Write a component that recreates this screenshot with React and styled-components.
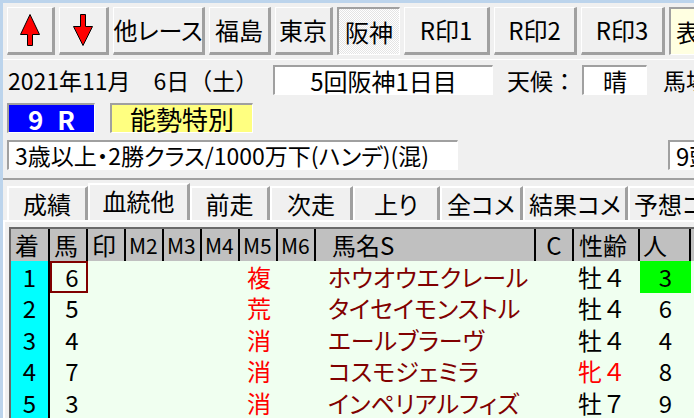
import React from 'react'
import styled, { createGlobalStyle } from 'styled-components'

const GlobalStyle = createGlobalStyle`
  html, body {
    margin: 0;
    padding: 0;
  }
  body {
    width: 694px;
    height: 418px;
    overflow: hidden;
    background: #f0f0f0;
    font-family: "Noto Sans CJK JP", "DejaVu Sans", sans-serif;
    color: #000;
  }
`

const Window = styled.div`
  width: 694px;
  height: 418px;
  box-sizing: border-box;
  border-top: 3px solid #bcd4ec;
  border-left: 3px solid #bcd4ec;
  background: #f0f0f0;
  overflow: hidden;
  display: flex;
  flex-direction: column;
`

const Toolbar = styled.div`
  display: flex;
  gap: 4px;
  padding: 4px 0 4px 4px;
  border-bottom: 1px solid #fff;
  overflow: hidden;
`

const ToolButton = styled.div`
  flex: none;
  box-sizing: border-box;
  width: ${p => p.$w}px;
  height: 48px;
  display: flex;
  align-items: center;
  justify-content: center;
  font-size: 24px;
  line-height: 1;
  white-space: nowrap;
  font-feature-settings: "palt";
  border-style: solid;
  border-width: ${p => (p.$pressed ? '2px 1px 1px 2px' : '1px 3px 3px 1px')};
  border-color: ${p => (p.$pressed ? '#a0a0a0 #fff #fff #a0a0a0' : '#fff #a0a0a0 #a0a0a0 #fff')};
  background-color: ${p => (p.$tone === 'yellow' ? '#ffffe1' : '#f0f0f0')};
  background-image: ${p =>
    p.$pressed && p.$tone !== 'yellow'
      ? 'repeating-conic-gradient(#ffffff 0 25%, #e4e4e4 0 50%)'
      : 'none'};
  background-size: 2px 2px;
  justify-content: ${p => (p.$tone === 'yellow' ? 'flex-start' : 'center')};
  padding-left: ${p => (p.$tone === 'yellow' ? 5 : 0)}px;
`

const InfoRow = styled.div`
  display: flex;
  align-items: center;
  height: 30px;
  margin-top: 5px;
  padding-left: 5px;
  font-size: 23px;
  line-height: 1;
  white-space: nowrap;
`

const Label = styled.span`
  flex: none;
  width: ${p => p.$w}px;
`

const Field = styled.div`
  flex: none;
  box-sizing: border-box;
  width: ${p => p.$w}px;
  height: 30px;
  margin-right: ${p => p.$mr || 0}px;
  background: #fff;
  border-style: solid;
  border-width: 2px 1px 1px 2px;
  border-color: #a0a0a0 #fff #fff #a0a0a0;
  display: flex;
  align-items: center;
  justify-content: ${p => (p.$left ? 'flex-start' : 'center')};
  padding-left: ${p => (p.$left ? 6 : 0)}px;
  font-size: ${p => p.$fs || 24}px;
  line-height: 1;
  font-feature-settings: ${p => (p.$palt ? '"palt"' : 'normal')};
  white-space: nowrap;
  overflow: hidden;
`

const RaceRow = styled.div`
  display: flex;
  gap: 15px;
  height: 30px;
  margin-top: 8px;
  padding-left: 4px;
`

const Badge = styled.div`
  flex: none;
  box-sizing: border-box;
  width: ${p => p.$w}px;
  height: 30px;
  display: flex;
  align-items: center;
  justify-content: center;
  gap: ${p => p.$gap || 0}px;
  background: ${p => p.$bg};
  color: ${p => p.$fg};
  font-size: 26px;
  line-height: 1;
  font-weight: ${p => (p.$bold ? 700 : 400)};
  border-style: solid;
  border-width: 2px 1px 1px 2px;
  border-color: #a0a0a0 #fff #fff #a0a0a0;
`

const CondRow = styled.div`
  display: flex;
  height: 30px;
  margin-top: 7px;
  padding-left: 4px;
  gap: 210px;
`

const TabStrip = styled.div`
  display: flex;
  align-items: flex-start;
  margin-top: 8px;
  border-top: 2px solid #a0a0a0;
  padding: 3px 0 0 4px;
  overflow: hidden;
  position: relative;
  z-index: 1;
`

const Tab = styled.div`
  flex: none;
  box-sizing: border-box;
  width: ${p => p.$w}px;
  height: ${p => (p.$active ? 39 : 34)}px;
  margin-top: ${p => (p.$active ? 0 : 3)}px;
  margin-bottom: ${p => (p.$active ? -2 : 0)}px;
  border-style: solid;
  border-width: 2px 3px 0 2px;
  border-color: #fff #a0a0a0 #fff #fff;
  background: #f0f0f0;
  display: flex;
  align-items: center;
  justify-content: center;
  padding-bottom: ${p => (p.$active ? 5 : 1)}px;
  font-size: 24px;
  line-height: 1;
  font-feature-settings: "palt";
  white-space: nowrap;
`

const Panel = styled.div`
  flex: 1;
  border-top: 2px solid #fff;
  border-left: 2px solid #fff;
  padding: 5px 0 0 4px;
  overflow: hidden;
`

const Grid = styled.div`
  border-top: 2px solid #696969;
  border-left: 2px solid #696969;
  background: #f0fff0;
  height: 100%;
`

const columns = '39px repeat(7, 38px) 220px 38px 66px 51px 200px'

const HeadRow = styled.div`
  display: grid;
  grid-template-columns: ${columns};
  height: 32px;
  background: #c0c0c0;
`

const HeadCell = styled.div`
  box-sizing: border-box;
  border-right: 2px solid #000;
  padding-left: ${p => p.$pl ?? 4}px;
  text-align: ${p => (p.$center ? 'center' : 'left')};
  font-size: ${p => p.$fs || 24}px;
  line-height: 32px;
  white-space: nowrap;
  overflow: hidden;
  &:last-child {
    border-right: none;
  }
`

const DataRow = styled.div`
  display: grid;
  grid-template-columns: ${columns};
  height: 31.5px;
`

const Cell = styled.div`
  box-sizing: border-box;
  display: flex;
  align-items: center;
  justify-content: ${p => (p.$align === 'left' ? 'flex-start' : 'center')};
  line-height: 1;
  font-size: 24px;
  white-space: nowrap;
  color: ${p => p.$color || '#000'};
  padding-left: ${p => p.$pl || 0}px;
  background: ${p => p.$bg || 'transparent'};
  font-feature-settings: ${p => (p.$palt ? '"palt"' : 'normal')};
`

const PosCell = styled(Cell)`
  background: #00ffff;
  border-right: 2px solid #000;
`

const NumCell = styled(Cell)`
  box-shadow: ${p => (p.$boxed ? 'inset 0 0 0 2px #800000' : 'none')};
`

const ArrowUp = () => (
  <svg width="20" height="32" viewBox="0 0 20 32">
    <polygon
      points="10,0.5 19.5,20.5 12.5,20.5 12.5,31.5 7.5,31.5 7.5,20.5 0.5,20.5"
      fill="#ff0000"
      stroke="#000"
      strokeWidth="1"
    />
  </svg>
)

const ArrowDown = () => (
  <svg width="20" height="32" viewBox="0 0 20 32">
    <polygon
      points="7.5,0.5 12.5,0.5 12.5,12.5 19.5,12.5 10,31.5 0.5,12.5 7.5,12.5"
      fill="#ff0000"
      stroke="#000"
      strokeWidth="1"
    />
  </svg>
)

const buttons = [
  { w: 92, label: '他レース' },
  { w: 62, label: '福島' },
  { w: 58, label: '東京' },
  { w: 63, label: '阪神', pressed: true },
  { w: 86, label: 'R印1' },
  { w: 83, label: 'R印2' },
  { w: 84, label: 'R印3' },
  { w: 90, label: '表示', pressed: true, tone: 'yellow' },
]

const tabs = [
  { w: 81, label: '成績' },
  { w: 102, label: '血統他', active: true },
  { w: 80, label: '前走' },
  { w: 83, label: '次走' },
  { w: 87, label: '上り' },
  { w: 83, label: '全コメ' },
  { w: 105, label: '結果コメ' },
  { w: 105, label: '予想コメ' },
]

const heads = [
  { t: '着' },
  { t: '馬' },
  { t: '印' },
  { t: 'M2', pl: 3, fs: 21 },
  { t: 'M3', pl: 3, fs: 21 },
  { t: 'M4', pl: 3, fs: 21 },
  { t: 'M5', pl: 3, fs: 21 },
  { t: 'M6', pl: 3, fs: 21 },
  { t: '馬名S', pl: 16 },
  { t: 'C', center: true, pl: 0 },
  { t: '性齢', pl: 5 },
  { t: '人', pl: 3 },
  { t: '' },
]

const horses = [
  { pos: 1, num: 6, mark: '複', name: 'ホウオウエクレール', sex: '牡４', pop: 3, top: true },
  { pos: 2, num: 5, mark: '荒', name: 'タイセイモンストル', sex: '牡４', pop: 6 },
  { pos: 3, num: 4, mark: '消', name: 'エールブラーヴ', sex: '牡４', pop: 4 },
  { pos: 4, num: 7, mark: '消', name: 'コスモジェミラ', sex: '牝４', pop: 8, mare: true },
  { pos: 5, num: 3, mark: '消', name: 'インペリアルフィズ', sex: '牡７', pop: 9 },
]

export default function App() {
  return (
    <>
      <GlobalStyle />
      <Window>
        <Toolbar>
          <ToolButton $w={48}><ArrowUp /></ToolButton>
          <ToolButton $w={50}><ArrowDown /></ToolButton>
          {buttons.map(b => (
            <ToolButton key={b.label} $w={b.w} $pressed={b.pressed} $tone={b.tone}>
              {b.label}
            </ToolButton>
          ))}
        </Toolbar>

        <InfoRow>
          <Label $w={265}>2021年11月　6日（土）</Label>
          <Field $w={220} $mr={14}>5回阪神1日目</Field>
          <Label $w={75}>天候：</Label>
          <Field $w={65} $mr={16}>晴</Field>
          <Label $w={120}>馬場：</Label>
        </InfoRow>

        <RaceRow>
          <Badge $w={88} $bg="#0000ff" $fg="#fff" $gap={14} $bold>
            <span>9</span>
            <span>R</span>
          </Badge>
          <Badge $w={143} $bg="#ffff80" $fg="#000">能勢特別</Badge>
        </RaceRow>

        <CondRow>
          <Field $w={451} $left $palt $fs={23}>3歳以上・2勝クラス/1000万下(ハンデ)(混)</Field>
          <Field $w={60} $left>9頭</Field>
        </CondRow>

        <TabStrip>
          {tabs.map(t => (
            <Tab key={t.label} $w={t.w} $active={t.active}>{t.label}</Tab>
          ))}
        </TabStrip>

        <Panel>
          <Grid>
            <HeadRow>
              {heads.map((h, i) => (
                <HeadCell key={i} $pl={h.pl} $fs={h.fs} $center={h.center}>{h.t}</HeadCell>
              ))}
            </HeadRow>
            {horses.map(h => (
              <DataRow key={h.pos}>
                <PosCell>{h.pos}</PosCell>
                <NumCell $boxed={h.top} $pl={6}>{h.num}</NumCell>
                <Cell />
                <Cell />
                <Cell />
                <Cell />
                <Cell $color="#ff0000">{h.mark}</Cell>
                <Cell />
                <Cell $align="left" $pl={12} $color="#800000" $palt>{h.name}</Cell>
                <Cell />
                <Cell $align="left" $pl={4} $color={h.mare ? '#ff0000' : '#000'}>{h.sex}</Cell>
                <Cell $bg={h.top ? '#00ff00' : undefined}>{h.pop}</Cell>
                <Cell />
              </DataRow>
            ))}
          </Grid>
        </Panel>
      </Window>
    </>
  )
}
